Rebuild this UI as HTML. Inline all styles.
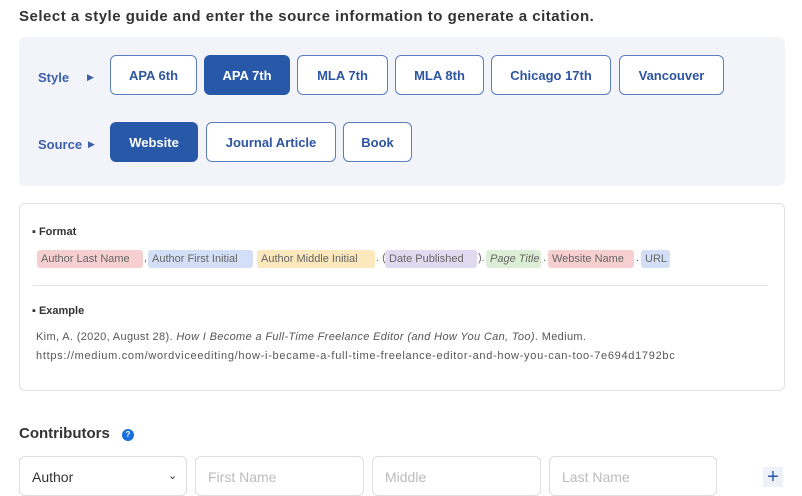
<!DOCTYPE html>
<html><head><style>
*{box-sizing:border-box;margin:0;padding:0}
body{width:802px;height:485px;overflow:hidden;background:#fff;font-family:"Liberation Sans",sans-serif;position:relative}
.a{position:absolute}
h1{position:absolute;left:19px;top:8px;font-size:15px;font-weight:bold;color:#333;letter-spacing:0.5px;white-space:nowrap}
.panel{left:19px;top:37px;width:766px;height:149px;background:#f2f4fa;border-radius:6px}
.lbl{font-size:13px;font-weight:bold;color:#3d5fa8}
.btn{position:absolute;height:40px;border:1.5px solid #5a7ec0;border-radius:6px;background:#fff;color:#2d55a0;font-size:13px;font-weight:bold;display:flex;align-items:center;justify-content:center}
.on{background:#2858a8;color:#fff;border-color:#2858a8}
.card{left:19px;top:203px;width:766px;height:188px;border:1px solid #e2e2e2;border-radius:6px;background:#fff}
.sec{font-size:11px;font-weight:bold;color:#333}
.chip{position:absolute;top:250px;height:18px;border-radius:3px;font-size:11px;color:#666;display:flex;align-items:center;padding-left:4px;white-space:nowrap}
.p{position:absolute;top:252px;font-size:11px;color:#666}
.ex{font-size:11px;color:#555;white-space:nowrap}
.in{position:absolute;top:456px;height:40px;border:1px solid #ddd;border-radius:6px;font-size:14px;color:#bbb;padding:12px 0 0 12px}
</style></head><body>
<h1>Select a style guide and enter the source information to generate a citation.</h1>
<div class="a panel"></div>
<div class="a lbl" style="left:38px;top:70px">Style</div>
<div class="a" style="left:87px;top:72px;font-size:9px;color:#3d5fa8">▶</div>
<div class="a lbl" style="left:38px;top:137px">Source</div>
<div class="a" style="left:88px;top:139px;font-size:9px;color:#3d5fa8">▶</div>
<div class="btn" style="left:110px;top:55px;width:87px">APA 6th</div>
<div class="btn on" style="left:204px;top:55px;width:86px">APA 7th</div>
<div class="btn" style="left:297px;top:55px;width:91px">MLA 7th</div>
<div class="btn" style="left:395px;top:55px;width:89px">MLA 8th</div>
<div class="btn" style="left:491px;top:55px;width:120px">Chicago 17th</div>
<div class="btn" style="left:619px;top:55px;width:105px">Vancouver</div>
<div class="btn on" style="left:110px;top:122px;width:88px">Website</div>
<div class="btn" style="left:206px;top:122px;width:130px">Journal Article</div>
<div class="btn" style="left:343px;top:122px;width:69px">Book</div>
<div class="a card"></div>
<div class="a sec" style="left:32px;top:226px">▪ Format</div>
<div class="chip" style="left:37px;width:106px;background:#f6d0d0">Author Last Name</div>
<div class="p" style="left:144px">,</div>
<div class="chip" style="left:148px;width:105px;background:#d3dff6">Author First Initial</div>
<div class="chip" style="left:257px;width:118px;background:#fbe8bd">Author Middle Initial</div>
<div class="p" style="left:376px">. (</div>
<div class="chip" style="left:385px;width:92px;background:#e0daf0">Date Published</div>
<div class="p" style="left:478px">).</div>
<div class="chip" style="left:486px;width:55px;background:#dcefd6;font-style:italic">Page Title</div>
<div class="p" style="left:543px">.</div>
<div class="chip" style="left:548px;width:86px;background:#f6d0d0">Website Name</div>
<div class="p" style="left:636px">.</div>
<div class="chip" style="left:641px;width:29px;background:#d3dff6">URL</div>
<div class="a" style="left:33px;top:285px;width:735px;height:1px;background:#e3e3e3"></div>
<div class="a sec" style="left:32px;top:305px">▪ Example</div>
<div class="a ex" style="left:36px;top:331px;letter-spacing:0.35px">Kim, A. (2020, August 28). <i>How I Become a Full-Time Freelance Editor (and How You Can, Too)</i>. Medium.</div>
<div class="a ex" style="left:36px;top:350px;letter-spacing:0.7px">https://medium.com/wordviceediting/how-i-became-a-full-time-freelance-editor-and-how-you-can-too-7e694d1792bc</div>
<div class="a" style="left:19px;top:425px;font-size:15px;font-weight:bold;color:#333">Contributors</div>
<div class="a" style="left:122px;top:429px;width:12px;height:12px;border-radius:50%;background:#1a6de0;color:#fff;font-size:8px;font-weight:bold;text-align:center;line-height:12px">?</div>
<div class="in" style="left:19px;width:168px;color:#333">Author<span style="position:absolute;left:148px;top:12px;font-size:11px">⌄</span></div>
<div class="in" style="left:195px;width:169px">First Name</div>
<div class="in" style="left:372px;width:169px">Middle</div>
<div class="in" style="left:549px;width:168px">Last Name</div>
<div class="a" style="left:763px;top:467px;width:20px;height:20px;background:#eef1f8;color:#2858a8;font-size:20px;text-align:center;line-height:20px">+</div>
</body></html>
